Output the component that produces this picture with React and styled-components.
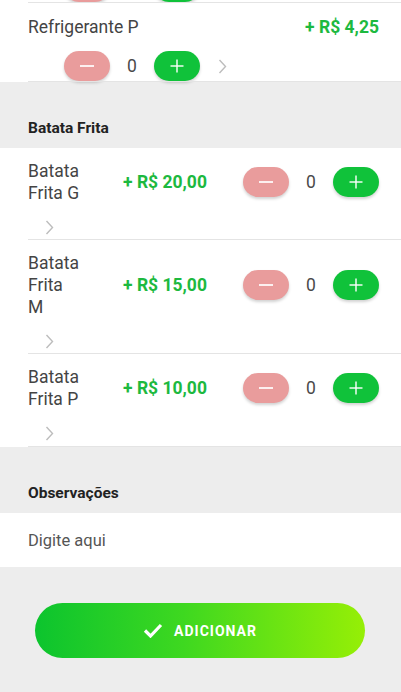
import React from "react";
import styled, { createGlobalStyle } from "styled-components";

const COLORS = {
  green: "#1db93f",
  plus: "#10c23a",
  minus: "#e99c9c",
  text: "#444444",
  gray: "#ededed",
  line: "#e4e4e4",
};

const batatas = [
  { name: "Batata Frita G", price: "+ R$ 20,00" },
  { name: "Batata Frita M", price: "+ R$ 15,00" },
  { name: "Batata Frita P", price: "+ R$ 10,00" },
];

const Chevron = () => (
  <svg width="9" height="15" viewBox="0 0 9 15">
    <polyline points="1.5,1 7.5,7.5 1.5,14" fill="none" stroke="#bdbdbd" strokeWidth="1.4" />
  </svg>
);

const Counter = ({ qty }) => (
  <CounterBox>
    <RoundButton kind="minus">
      <svg width="14" height="14" viewBox="0 0 14 14">
        <line x1="0" y1="7" x2="14" y2="7" stroke="rgba(255,255,255,0.85)" strokeWidth="2" />
      </svg>
    </RoundButton>
    <Qty>{qty}</Qty>
    <RoundButton kind="plus">
      <svg width="14" height="14" viewBox="0 0 14 14">
        <line x1="0.5" y1="7" x2="13.5" y2="7" stroke="#fff" strokeWidth="1.4" />
        <line x1="7" y1="0.5" x2="7" y2="13.5" stroke="#fff" strokeWidth="1.4" />
      </svg>
    </RoundButton>
  </CounterBox>
);

const App = () => {
  return (
    <Screen>
      <GlobalStyle />
      <Content>
        {/* tail of the row scrolled above the viewport */}
        <StackedRow>
          <Controls peek>
            <Counter />
          </Controls>
        </StackedRow>
        <StackedRow>
          <TopLine>
            <Name>Refrigerante P</Name>
            <Price>+ R$ 4,25</Price>
          </TopLine>
          <Controls>
            <Counter qty={0} />
            <Chevron />
          </Controls>
        </StackedRow>

        <SectionTitle>Batata Frita</SectionTitle>
        <Group>
          {batatas.map((item) => (
            <InlineRow key={item.name}>
              <MainLine>
                <NameCell>
                  <Name narrow>{item.name}</Name>
                </NameCell>
                <Price>{item.price}</Price>
                <Counter qty={0} />
              </MainLine>
              <ChevronLine>
                <Chevron />
              </ChevronLine>
            </InlineRow>
          ))}
        </Group>

        <SectionTitle>Observações</SectionTitle>
        <NoteField placeholder="Digite aqui" />

        <Footer>
          <AddButton>
            <svg width="20" height="15" viewBox="0 0 20 15">
              <polyline points="2,7.5 7.5,13 18,2" fill="none" stroke="#fff" strokeWidth="3.2" />
            </svg>
            ADICIONAR
          </AddButton>
        </Footer>
      </Content>
    </Screen>
  );
};

const GlobalStyle = createGlobalStyle`
  body {
    margin: 0;
    background: ${COLORS.gray};
    font-family: Roboto, "Liberation Sans", sans-serif;
  }
`;

const Screen = styled.div`
  width: 401px;
  height: 692px;
  overflow: hidden;
  background: ${COLORS.gray};
`;

// page is scrolled: only the bottom of the previous row shows
const Content = styled.div`
  display: flex;
  flex-direction: column;
  margin-top: -28px;
`;

const StackedRow = styled.div`
  display: flex;
  flex-direction: column;
  background: #fff;
  padding-left: 28px;
  & > * {
    padding-right: 22px;
  }
  &::after {
    content: "";
    display: block;
    height: 1px;
    background: ${COLORS.line};
  }
`;

const TopLine = styled.div`
  display: flex;
  justify-content: space-between;
  align-items: center;
  padding-top: 13px;
`;

const Controls = styled.div`
  display: flex;
  align-items: center;
  gap: 18px;
  margin-top: ${(p) => (p.peek ? "0" : "13px")};
  padding-left: 36px;
`;

const Name = styled.div`
  font-size: 17.5px;
  line-height: 22px;
  color: ${COLORS.text};
  width: ${(p) => (p.narrow ? "53px" : "auto")};
`;

const Price = styled.div`
  font-size: 17.5px;
  font-weight: 700;
  color: ${COLORS.green};
  white-space: nowrap;
`;

const CounterBox = styled.div`
  display: flex;
  align-items: center;
`;

const RoundButton = styled.div`
  width: 46px;
  height: 30px;
  border-radius: 15px;
  display: flex;
  align-items: center;
  justify-content: center;
  background: ${(p) => (p.kind === "plus" ? COLORS.plus : COLORS.minus)};
  box-shadow: 0 2px 3px rgba(0, 0, 0, 0.18);
`;

const Qty = styled.span`
  width: 44px;
  text-align: center;
  font-size: 17.5px;
  color: #4a4a4a;
`;

const SectionTitle = styled.div`
  padding: 36px 28px 10px;
  font-size: 15.5px;
  line-height: 20px;
  font-weight: 700;
  color: #222;
`;

const Group = styled.div`
  display: flex;
  flex-direction: column;
  background: #fff;
`;

const InlineRow = styled.div`
  margin-left: 28px;
  padding: 12px 22px 4px 0;
  border-bottom: 1px solid ${COLORS.line};
  &:last-child {
    padding-bottom: 5px;
  }
`;

const MainLine = styled.div`
  display: grid;
  grid-template-columns: 95px 1fr auto;
  align-items: center;
`;

const NameCell = styled.div`
  display: flex;
`;

const ChevronLine = styled.div`
  display: flex;
  align-items: center;
  height: 16px;
  margin-top: 15px;
  padding-left: 17px;
`;

const NoteField = styled.input`
  border: none;
  outline: none;
  background: #fff;
  height: 54px;
  padding: 0 28px;
  font-family: inherit;
  font-size: 16.5px;
  color: #555;
  &::placeholder {
    color: #555;
  }
`;

const Footer = styled.div`
  display: flex;
  justify-content: center;
  padding-top: 36px;
`;

const AddButton = styled.button`
  width: 330px;
  height: 55px;
  border: none;
  border-radius: 28px;
  background: linear-gradient(90deg, #0cc42e 0%, #3ed820 45%, #96ef06 100%);
  color: #fff;
  font-family: inherit;
  font-size: 14px;
  font-weight: 700;
  letter-spacing: 1px;
  display: flex;
  align-items: center;
  justify-content: center;
  gap: 11px;
  margin-right: 1px;
`;

export default App;
